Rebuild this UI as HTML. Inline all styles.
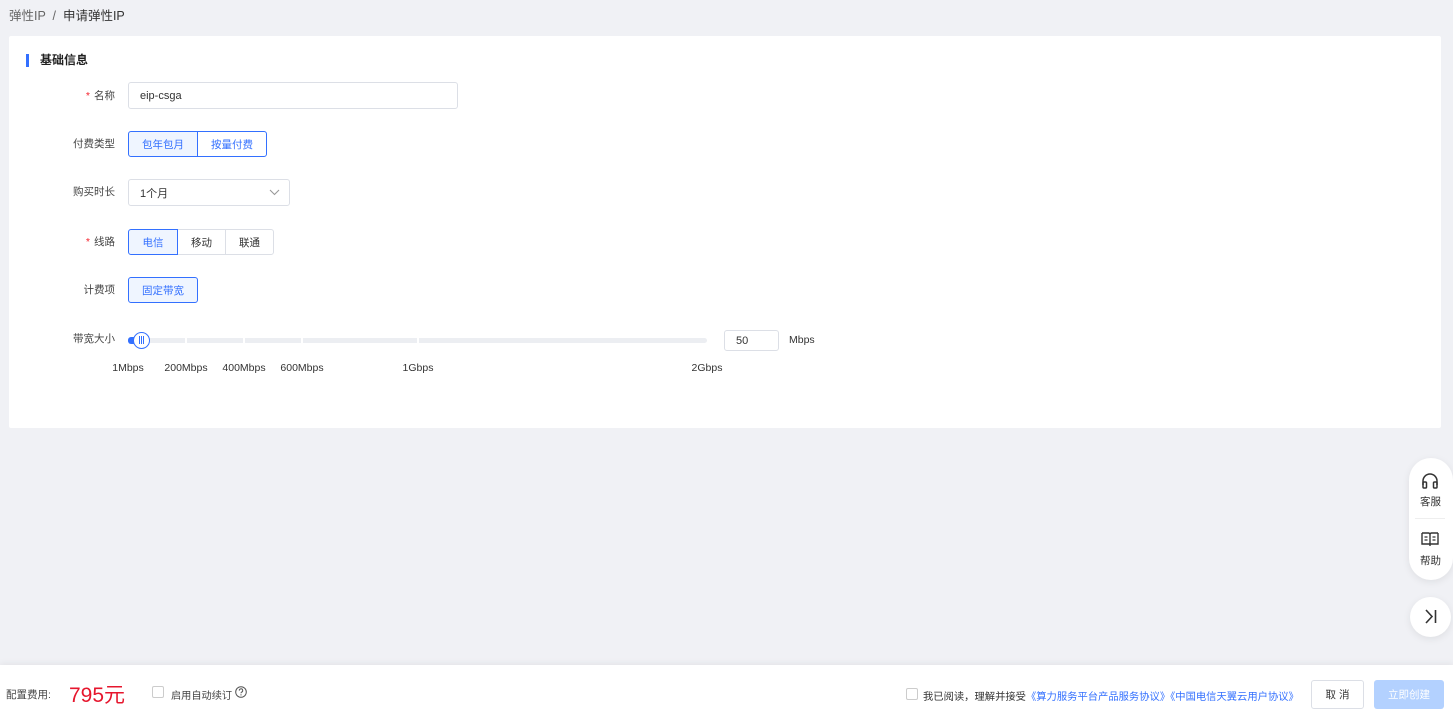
<!DOCTYPE html>
<html><head><meta charset="utf-8"><style>
*{box-sizing:border-box;margin:0;padding:0}
body{width:1453px;height:713px;background:#f0f1f5;font-family:"Liberation Sans","Noto Sans CJK SC",sans-serif;font-size:11px;color:#333;position:relative;overflow:hidden}
.abs{position:absolute}
.crumb{left:9px;top:5px;font-size:12.5px;color:#666}
.crumb b{font-weight:normal;color:#333}
.card{left:9px;top:36px;width:1432px;height:392px;background:#fff;border-radius:2px}
.title{left:17px;top:18px;font-size:12px;font-weight:bold;color:#222;padding-left:11px;border-left:3px solid #3370ff;line-height:13px}
.lbl{width:106px;text-align:right;font-size:10.5px;color:#444}
.lbl i{color:#f5222d;font-style:normal;margin-right:4px}
.inp{border:1px solid #dcdfe6;border-radius:3px;background:#fff;padding-left:11px;display:flex;align-items:center;color:#333;font-size:11px}
.bg{display:flex}
.bg span{height:26px;border:1px solid #dcdfe6;display:flex;align-items:center;justify-content:center;color:#333;margin-left:-1px;font-size:10.5px}
.bg span.on{border-color:#3370ff;background:#eff5ff;color:#3370ff;z-index:1}
.bg span:first-child{border-radius:3px 0 0 3px;margin-left:0}
.bg span:last-child{border-radius:0 3px 3px 0}
.tick{top:362px;font-size:10.5px;color:#333;transform:translateX(-50%)}
.foot{left:0;top:665px;width:1453px;height:48px;background:#fff;box-shadow:0 -2px 6px rgba(0,0,0,.05)}
.cb{width:12px;height:12px;border:1px solid #ccc;border-radius:2px;background:#fff}
.side{background:#fff;border-radius:22px;box-shadow:0 2px 8px rgba(0,0,0,.08)}
</style></head><body>
<div class="abs crumb">弹性IP &nbsp;/&nbsp; <b>申请弹性IP</b></div>
<div class="abs card">
<div class="abs title">基础信息</div>
</div>
<div class="abs lbl" style="left:9px;top:88px"><i>*</i>名称</div>
<div class="abs inp" style="left:128px;top:82px;width:330px;height:27px">eip-csga</div>
<div class="abs lbl" style="left:9px;top:136px">付费类型</div>
<div class="abs bg" style="left:128px;top:131px"><span class="on" style="width:70px">包年包月</span><span style="width:70px;border-color:#3370ff;color:#3370ff">按量付费</span></div>
<div class="abs lbl" style="left:9px;top:184px">购买时长</div>
<div class="abs inp" style="left:128px;top:179px;width:162px;height:27px">1个月<svg style="position:absolute;left:140px;top:9px" width="11" height="7" viewBox="0 0 11 7"><path d="M1 1l4.5 4.5L10 1" fill="none" stroke="#999" stroke-width="1.1"/></svg></div>
<div class="abs lbl" style="left:9px;top:234px"><i>*</i>线路</div>
<div class="abs bg" style="left:128px;top:229px"><span class="on" style="width:50px">电信</span><span style="width:49px">移动</span><span style="width:49px">联通</span></div>
<div class="abs lbl" style="left:9px;top:282px">计费项</div>
<div class="abs bg" style="left:128px;top:277px"><span class="on" style="width:70px;border-radius:3px">固定带宽</span></div>
<div class="abs lbl" style="left:9px;top:331px">带宽大小</div>
<div class="abs" style="left:128px;top:338px;width:579px;height:5px;background:#eceef2;border-radius:3px"></div>
<div class="abs" style="left:185px;top:337px;width:2px;height:7px;background:#fff"></div>
<div class="abs" style="left:243px;top:337px;width:2px;height:7px;background:#fff"></div>
<div class="abs" style="left:301px;top:337px;width:2px;height:7px;background:#fff"></div>
<div class="abs" style="left:417px;top:337px;width:2px;height:7px;background:#fff"></div>
<div class="abs" style="left:128px;top:337px;width:14px;height:7px;background:#3370ff;border-radius:3px"></div>
<div class="abs" style="left:133px;top:332px;width:17px;height:17px;border:1.5px solid #3370ff;border-radius:50%;background:#fff"></div>
<div class="abs" style="left:139px;top:336px;width:1px;height:8px;background:#3370ff;box-shadow:2px 0 #3370ff,4px 0 #3370ff"></div>
<div class="abs tick" style="left:128px">1Mbps</div>
<div class="abs tick" style="left:186px">200Mbps</div>
<div class="abs tick" style="left:244px">400Mbps</div>
<div class="abs tick" style="left:302px">600Mbps</div>
<div class="abs tick" style="left:418px">1Gbps</div>
<div class="abs tick" style="left:707px">2Gbps</div>
<div class="abs inp" style="left:724px;top:330px;width:55px;height:21px">50</div>
<div class="abs" style="left:789px;top:334px;font-size:10.5px">Mbps</div>

<div class="abs side" style="left:1409px;top:458px;width:44px;height:122px"></div>
<svg class="abs" style="left:1421px;top:472px" width="18" height="17" viewBox="0 0 18 17"><path d="M2 13V9a7 7 0 0 1 14 0v4" fill="none" stroke="#333" stroke-width="1.5"/><rect x="2" y="10" width="3.5" height="6" rx="1" fill="none" stroke="#333" stroke-width="1.5"/><rect x="12.5" y="10" width="3.5" height="6" rx="1" fill="none" stroke="#333" stroke-width="1.5"/></svg>
<div class="abs" style="left:1420px;top:494px;font-size:10.5px">客服</div>
<div class="abs" style="left:1415px;top:518px;width:30px;height:1px;background:#eee"></div>
<svg class="abs" style="left:1421px;top:531px" width="18" height="16" viewBox="0 0 18 16"><path d="M1 2h6.5a1.5 1.5 0 0 1 1.5 1.5V15M17 2h-6.5A1.5 1.5 0 0 0 9 3.5M1 2v11h16V2" fill="none" stroke="#333" stroke-width="1.4"/><path d="M3.5 6h3M3.5 9h3M11.5 6h3M11.5 9h3" stroke="#333" stroke-width="1.2"/></svg>
<div class="abs" style="left:1420px;top:553px;font-size:10.5px">帮助</div>
<div class="abs side" style="left:1410px;top:597px;width:41px;height:40px;border-radius:50%"></div>
<svg class="abs" style="left:1424px;top:609px" width="14" height="15" viewBox="0 0 14 15"><path d="M2 1l6 6.5L2 14M11.5 1v13" fill="none" stroke="#333" stroke-width="1.6"/></svg>

<div class="abs foot"></div>
<div class="abs" style="left:6px;top:687px;font-size:10.5px;color:#444">配置费用:</div>
<div class="abs" style="left:69px;top:679px;font-size:21px;color:#e6162d">795元</div>
<div class="abs cb" style="left:152px;top:686px"></div>
<div class="abs" style="left:171px;top:687px;font-size:10.2px;color:#444">启用自动续订</div>
<svg class="abs" style="left:235px;top:686px" width="12" height="12" viewBox="0 0 12 12"><circle cx="6" cy="6" r="5.3" fill="none" stroke="#555"/><path d="M4.3 4.6a1.7 1.7 0 1 1 2.3 1.5c-.5.2-.6.5-.6 1.1" fill="none" stroke="#555"/><circle cx="6" cy="8.9" r=".6" fill="#555"/></svg>
<div class="abs cb" style="left:906px;top:688px"></div>
<div class="abs" style="left:923px;top:688px;font-size:10.3px;color:#333;white-space:nowrap">我已阅读，理解并接受<span style="color:#3370ff">《算力服务平台产品服务协议》《中国电信天翼云用户协议》</span></div>
<div class="abs" style="left:1311px;top:680px;width:53px;height:29px;border:1px solid #dcdfe6;border-radius:3px;display:flex;align-items:center;justify-content:center;font-size:10.5px;background:#fff">取 消</div>
<div class="abs" style="left:1374px;top:680px;width:70px;height:29px;background:#b3d1ff;border-radius:3px;display:flex;align-items:center;justify-content:center;font-size:10.5px;color:#fff">立即创建</div>
</body></html>
